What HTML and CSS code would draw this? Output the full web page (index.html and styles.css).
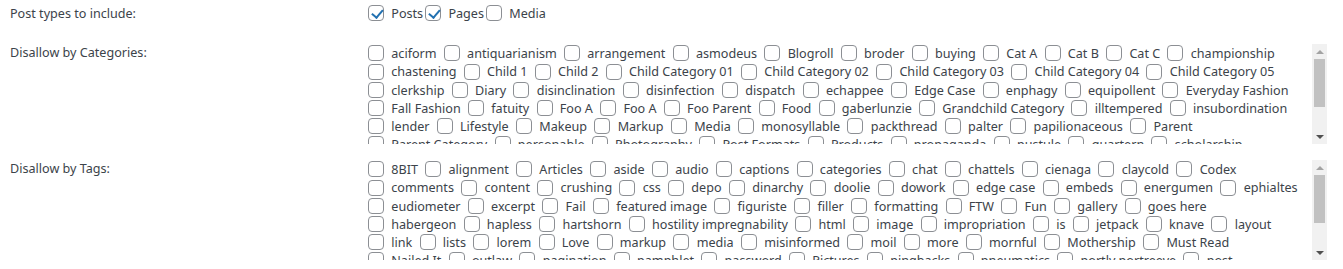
FILE: index.html
```html
<!DOCTYPE html>
<html lang="en">
<head>
    <meta charset="UTF-8">
    <meta name="viewport" content="width=device-width, initial-scale=1.0">
    <title>Settings</title>
    <link rel="stylesheet" href="styles.css">
</head>
<body>
    <div class="settings-form">
        <div class="form-row post-types-row">
            <div class="row-label">Post types to include:</div>
            <div class="row-field">
                <label class="inline-option"><input type="checkbox" checked> Posts</label><label class="inline-option"><input type="checkbox" checked> Pages</label><label class="inline-option"><input type="checkbox"> Media</label>
            </div>
        </div>

        <div class="form-row">
            <div class="row-label">Disallow by Categories:</div>
            <div class="row-field">
                <div class="list-box">
                    <div class="check-list">
                        <label><input type="checkbox"> aciform</label>
                        <label><input type="checkbox"> antiquarianism</label>
                        <label><input type="checkbox"> arrangement</label>
                        <label><input type="checkbox"> asmodeus</label>
                        <label><input type="checkbox"> Blogroll</label>
                        <label><input type="checkbox"> broder</label>
                        <label><input type="checkbox"> buying</label>
                        <label><input type="checkbox"> Cat A</label>
                        <label><input type="checkbox"> Cat B</label>
                        <label><input type="checkbox"> Cat C</label>
                        <label><input type="checkbox"> championship</label><br>
                        <label><input type="checkbox"> chastening</label>
                        <label><input type="checkbox"> Child 1</label>
                        <label><input type="checkbox"> Child 2</label>
                        <label><input type="checkbox"> Child Category 01</label>
                        <label><input type="checkbox"> Child Category 02</label>
                        <label><input type="checkbox"> Child Category 03</label>
                        <label><input type="checkbox"> Child Category 04</label>
                        <label><input type="checkbox"> Child Category 05</label><br>
                        <label><input type="checkbox"> clerkship</label>
                        <label><input type="checkbox"> Diary</label>
                        <label><input type="checkbox"> disinclination</label>
                        <label><input type="checkbox"> disinfection</label>
                        <label><input type="checkbox"> dispatch</label>
                        <label><input type="checkbox"> echappee</label>
                        <label><input type="checkbox"> Edge Case</label>
                        <label><input type="checkbox"> enphagy</label>
                        <label><input type="checkbox"> equipollent</label>
                        <label><input type="checkbox"> Everyday Fashion</label><br>
                        <label><input type="checkbox"> Fall Fashion</label>
                        <label><input type="checkbox"> fatuity</label>
                        <label><input type="checkbox"> Foo A</label>
                        <label><input type="checkbox"> Foo A</label>
                        <label><input type="checkbox"> Foo Parent</label>
                        <label><input type="checkbox"> Food</label>
                        <label><input type="checkbox"> gaberlunzie</label>
                        <label><input type="checkbox"> Grandchild Category</label>
                        <label><input type="checkbox"> illtempered</label>
                        <label><input type="checkbox"> insubordination</label><br>
                        <label><input type="checkbox"> lender</label>
                        <label><input type="checkbox"> Lifestyle</label>
                        <label><input type="checkbox"> Makeup</label>
                        <label><input type="checkbox"> Markup</label>
                        <label><input type="checkbox"> Media</label>
                        <label><input type="checkbox"> monosyllable</label>
                        <label><input type="checkbox"> packthread</label>
                        <label><input type="checkbox"> palter</label>
                        <label><input type="checkbox"> papilionaceous</label>
                        <label><input type="checkbox"> Parent</label><br>
                        <label><input type="checkbox"> Parent Category</label>
                        <label><input type="checkbox"> personable</label>
                        <label><input type="checkbox"> Photography</label>
                        <label><input type="checkbox"> Post Formats</label>
                        <label><input type="checkbox"> Products</label>
                        <label><input type="checkbox"> propaganda</label>
                        <label><input type="checkbox"> pustule</label>
                        <label><input type="checkbox"> quartern</label>
                        <label><input type="checkbox"> scholarship</label><br>
                        <label><input type="checkbox"> selfassertion</label>
                        <label><input type="checkbox"> sinople</label>
                        <label><input type="checkbox"> Sub</label>
                        <label><input type="checkbox"> subordinate</label>
                        <label><input type="checkbox"> synthetic</label>
                        <label><input type="checkbox"> Tech</label>
                        <label><input type="checkbox"> Test Category</label>
                        <label><input type="checkbox"> Uncategorized</label><br>
                        <label><input type="checkbox"> unpublished</label>
                        <label><input type="checkbox"> Wordpress</label>
                        <label><input type="checkbox"> WordPress Tips</label>
                    </div>
                    <div class="scrollbar">
                        <div class="scroll-btn scroll-up"><span class="arrow-up"></span></div>
                        <div class="scroll-track"><div class="scroll-thumb"></div></div>
                        <div class="scroll-btn scroll-down"><span class="arrow-down"></span></div>
                    </div>
                </div>
            </div>
        </div>

        <div class="form-row">
            <div class="row-label">Disallow by Tags:</div>
            <div class="row-field">
                <div class="list-box">
                    <div class="check-list">
                        <label><input type="checkbox"> 8BIT</label>
                        <label><input type="checkbox"> alignment</label>
                        <label><input type="checkbox"> Articles</label>
                        <label><input type="checkbox"> aside</label>
                        <label><input type="checkbox"> audio</label>
                        <label><input type="checkbox"> captions</label>
                        <label><input type="checkbox"> categories</label>
                        <label><input type="checkbox"> chat</label>
                        <label><input type="checkbox"> chattels</label>
                        <label><input type="checkbox"> cienaga</label>
                        <label><input type="checkbox"> claycold</label>
                        <label><input type="checkbox"> Codex</label><br>
                        <label><input type="checkbox"> comments</label>
                        <label><input type="checkbox"> content</label>
                        <label><input type="checkbox"> crushing</label>
                        <label><input type="checkbox"> css</label>
                        <label><input type="checkbox"> depo</label>
                        <label><input type="checkbox"> dinarchy</label>
                        <label><input type="checkbox"> doolie</label>
                        <label><input type="checkbox"> dowork</label>
                        <label><input type="checkbox"> edge case</label>
                        <label><input type="checkbox"> embeds</label>
                        <label><input type="checkbox"> energumen</label>
                        <label><input type="checkbox"> ephialtes</label><br>
                        <label><input type="checkbox"> eudiometer</label>
                        <label><input type="checkbox"> excerpt</label>
                        <label><input type="checkbox"> Fail</label>
                        <label><input type="checkbox"> featured image</label>
                        <label><input type="checkbox"> figuriste</label>
                        <label><input type="checkbox"> filler</label>
                        <label><input type="checkbox"> formatting</label>
                        <label><input type="checkbox"> FTW</label>
                        <label><input type="checkbox"> Fun</label>
                        <label><input type="checkbox"> gallery</label>
                        <label><input type="checkbox"> goes here</label><br>
                        <label><input type="checkbox"> habergeon</label>
                        <label><input type="checkbox"> hapless</label>
                        <label><input type="checkbox"> hartshorn</label>
                        <label><input type="checkbox"> hostility impregnability</label>
                        <label><input type="checkbox"> html</label>
                        <label><input type="checkbox"> image</label>
                        <label><input type="checkbox"> impropriation</label>
                        <label><input type="checkbox"> is</label>
                        <label><input type="checkbox"> jetpack</label>
                        <label><input type="checkbox"> knave</label>
                        <label><input type="checkbox"> layout</label><br>
                        <label><input type="checkbox"> link</label>
                        <label><input type="checkbox"> lists</label>
                        <label><input type="checkbox"> lorem</label>
                        <label><input type="checkbox"> Love</label>
                        <label><input type="checkbox"> markup</label>
                        <label><input type="checkbox"> media</label>
                        <label><input type="checkbox"> misinformed</label>
                        <label><input type="checkbox"> moil</label>
                        <label><input type="checkbox"> more</label>
                        <label><input type="checkbox"> mornful</label>
                        <label><input type="checkbox"> Mothership</label>
                        <label><input type="checkbox"> Must Read</label><br>
                        <label><input type="checkbox"> Nailed It</label>
                        <label><input type="checkbox"> outlaw</label>
                        <label><input type="checkbox"> pagination</label>
                        <label><input type="checkbox"> pamphlet</label>
                        <label><input type="checkbox"> password</label>
                        <label><input type="checkbox"> Pictures</label>
                        <label><input type="checkbox"> pingbacks</label>
                        <label><input type="checkbox"> pneumatics</label>
                        <label><input type="checkbox"> portly portreeve</label>
                        <label><input type="checkbox"> post</label><br>
                        <label><input type="checkbox"> post formats</label>
                        <label><input type="checkbox"> Programming</label>
                        <label><input type="checkbox"> quote</label>
                        <label><input type="checkbox"> read more</label>
                        <label><input type="checkbox"> shortcode</label>
                        <label><input type="checkbox"> standard</label>
                        <label><input type="checkbox"> status</label>
                        <label><input type="checkbox"> sticky</label><br>
                        <label><input type="checkbox"> success</label>
                        <label><input type="checkbox"> swagger</label>
                        <label><input type="checkbox"> Tags</label>
                    </div>
                    <div class="scrollbar">
                        <div class="scroll-btn scroll-up"><span class="arrow-up"></span></div>
                        <div class="scroll-track"><div class="scroll-thumb"></div></div>
                        <div class="scroll-btn scroll-down"><span class="arrow-down"></span></div>
                    </div>
                </div>
            </div>
        </div>
    </div>
</body>
</html>
```

FILE: styles.css
```css
body {
    margin: 0;
    background: #fff;
    color: #3c434a;
    font-family: 'Noto Sans', sans-serif;
    font-size: 12.6px;
    line-height: 18.2px;
}

.settings-form {
    padding: 5px 16px 0 10px;
}

.form-row {
    display: flex;
    margin-bottom: 16px;
}

.post-types-row {
    margin-bottom: 21px;
}

.row-label {
    width: 358px;
    flex-shrink: 0;
}

.row-field {
    flex: 1;
    min-width: 0;
}

.inline-option {
    margin-right: 2px;
}

.list-box {
    display: flex;
    height: 100px;
}

.check-list {
    flex: 1;
    min-width: 0;
    box-sizing: border-box;
    padding-top: 1px;
    overflow: hidden;
    white-space: nowrap;
}

.check-list label {
    margin-right: 4px;
}

/* fake classic scrollbar */
.scrollbar {
    width: 15px;
    flex-shrink: 0;
    display: flex;
    flex-direction: column;
    background: #f1f1f1;
}

.scroll-btn {
    height: 15px;
    display: flex;
    align-items: center;
    justify-content: center;
}

.arrow-up {
    width: 0;
    height: 0;
    border-left: 4px solid transparent;
    border-right: 4px solid transparent;
    border-bottom: 4px solid #a3a3a3;
}

.arrow-down {
    width: 0;
    height: 0;
    border-left: 4px solid transparent;
    border-right: 4px solid transparent;
    border-top: 4px solid #505050;
}

.scroll-track {
    flex: 1;
    padding: 0 2px;
}

.scroll-thumb {
    height: 48px;
    background: #c1c1c1;
}

input[type="checkbox"] {
    appearance: none;
    -webkit-appearance: none;
    position: relative;
    box-sizing: border-box;
    width: 16px;
    height: 16px;
    margin: -3px 4px 0 0;
    border: 1px solid #8c8f94;
    border-radius: 4px;
    background: #fff;
    vertical-align: middle;
    cursor: pointer;
}

input[type="checkbox"]:checked::before {
    content: "";
    position: absolute;
    left: 4.5px;
    top: 0.5px;
    width: 4.5px;
    height: 9px;
    border: solid #2271b1;
    border-width: 0 2px 2px 0;
    transform: rotate(40deg);
}
```
